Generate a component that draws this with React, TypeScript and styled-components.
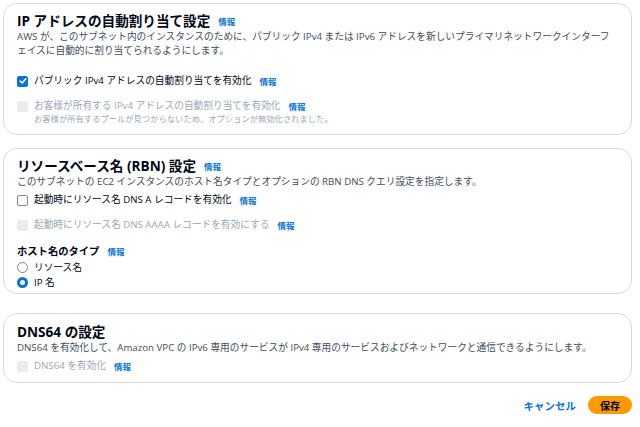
import React from 'react';
import styled, { createGlobalStyle } from 'styled-components';

const GlobalStyle = createGlobalStyle`
  html, body {
    margin: 0;
    padding: 0;
    background: #ffffff;
  }
  body {
    font-family: "Open Sans", "Noto Sans CJK JP", sans-serif;
    color: #000716;
  }
`;

const Page = styled.div`
  width: 640px;
  box-sizing: border-box;
  padding: 3px 8px 0 3px;
  display: flex;
  flex-direction: column;
`;

const Card = styled.section<{ $pt: number; $pb: number; $mb: number }>`
  border: 1px solid #d5d9de;
  border-radius: 14px;
  padding: ${(p) => p.$pt}px 10px ${(p) => p.$pb}px 13px;
  margin-bottom: ${(p) => p.$mb}px;
  display: flex;
  flex-direction: column;
`;

const Header = styled.div`
  display: flex;
  align-items: center;
  gap: 8px;
  height: 18px;
`;

const Title = styled.h2`
  margin: 0;
  font-size: 13.6px;
  line-height: 18px;
  font-weight: 700;
  color: #000716;
`;

const SubTitle = styled.h3`
  margin: 0;
  font-size: 10.3px;
  line-height: 16px;
  font-weight: 700;
  color: #000716;
`;

const Info = styled.a`
  font-size: 8.5px;
  font-weight: 700;
  color: #0972d3;
  text-decoration: none;
`;

const Description = styled.p<{ $mb: number }>`
  margin: 0 0 ${(p) => p.$mb}px 0;
  font-size: 9.7px;
  line-height: 14px;
  color: #414d5c;
  white-space: nowrap;
`;

const Field = styled.div<{ $mb: number }>`
  display: flex;
  align-items: flex-start;
  gap: 6px;
  margin-bottom: ${(p) => p.$mb}px;
`;

const Box = styled.span<{ $checked?: boolean; $disabled?: boolean }>`
  flex: none;
  width: 11px;
  height: 11px;
  margin-top: 2.5px;
  box-sizing: border-box;
  border-radius: 2px;
  display: flex;
  align-items: center;
  justify-content: center;
  background: ${(p) => (p.$checked ? '#0972d3' : p.$disabled ? '#e9ebed' : '#ffffff')};
  border: 1.4px solid ${(p) => (p.$checked ? '#0972d3' : p.$disabled ? '#e9ebed' : '#7d8998')};
`;

const FieldText = styled.div`
  display: flex;
  flex-direction: column;
`;

const LabelLine = styled.div`
  display: flex;
  align-items: center;
  gap: 8px;
`;

const Label = styled.span<{ $disabled?: boolean }>`
  font-size: 9.7px;
  line-height: 16px;
  color: ${(p) => (p.$disabled ? '#9ba7b6' : '#000716')};
`;

const Hint = styled.span`
  font-size: 8.3px;
  line-height: 10px;
  color: #9ba7b6;
`;

const RadioRow = styled.div`
  display: flex;
  align-items: center;
  gap: 6px;
  height: 15px;
`;

const RadioDot = styled.span<{ $checked?: boolean }>`
  flex: none;
  width: 11px;
  height: 11px;
  box-sizing: border-box;
  border-radius: 50%;
  background: #ffffff;
  border: ${(p) => (p.$checked ? '3.5px solid #0972d3' : '1.4px solid #7d8998')};
`;

const Footer = styled.div`
  display: flex;
  justify-content: flex-end;
  align-items: center;
  gap: 12px;
  margin-top: 13px;
`;

const LinkButton = styled.button`
  border: none;
  background: none;
  padding: 0;
  font-family: inherit;
  font-size: 10.5px;
  font-weight: 700;
  color: #0972d3;
`;

const PrimaryButton = styled.button`
  border: none;
  background: #ff9900;
  border-radius: 10px;
  width: 44px;
  height: 18px;
  padding: 0;
  font-family: inherit;
  font-size: 10px;
  font-weight: 700;
  color: #000716;
`;

const Check = () => (
  <svg width="8" height="8" viewBox="0 0 8 8">
    <path d="M1.2 4.2 L3.2 6 L6.8 1.8" fill="none" stroke="#fff" strokeWidth="1.6" strokeLinecap="round" strokeLinejoin="round" />
  </svg>
);

type CheckProps = {
  label: string;
  checked?: boolean;
  disabled?: boolean;
  hint?: string;
  mb: number;
};

const CheckField = ({ label, checked, disabled, hint, mb }: CheckProps) => (
  <Field $mb={mb}>
    <Box $checked={checked} $disabled={disabled}>{checked && <Check />}</Box>
    <FieldText>
      <LabelLine>
        <Label $disabled={disabled}>{label}</Label>
        <Info href="#">情報</Info>
      </LabelLine>
      {hint && <Hint>{hint}</Hint>}
    </FieldText>
  </Field>
);

const App = () => (
  <Page>
    <GlobalStyle />
    <Card $pt={8} $pb={10} $mb={13}>
      <Header>
        <Title>IP アドレスの自動割り当て設定</Title>
        <Info href="#">情報</Info>
      </Header>
      <Description $mb={15}>
        AWS が、このサブネット内のインスタンスのために、パブリック IPv4 または IPv6 アドレスを新しいプライマリネットワークインターフ<br />
        ェイスに自動的に割り当てられるようにします。
      </Description>
      <CheckField label="パブリック IPv4 アドレスの自動割り当てを有効化" checked mb={9} />
      <CheckField
        label="お客様が所有する IPv4 アドレスの自動割り当てを有効化"
        disabled
        hint="お客様が所有するプールが見つからないため、オプションが無効化されました。"
        mb={0}
      />
    </Card>

    <Card $pt={8} $pb={3} $mb={19}>
      <Header>
        <Title>リソースベース名 (RBN) 設定</Title>
        <Info href="#">情報</Info>
      </Header>
      <Description $mb={3}>
        このサブネットの EC2 インスタンスのホスト名タイプとオプションの RBN DNS クエリ設定を指定します。
      </Description>
      <CheckField label="起動時にリソース名 DNS A レコードを有効化" mb={9} />
      <CheckField label="起動時にリソース名 DNS AAAA レコードを有効にする" disabled mb={9} />
      <Header>
        <SubTitle>ホスト名のタイプ</SubTitle>
        <Info href="#">情報</Info>
      </Header>
      <RadioRow>
        <RadioDot />
        <Label>リソース名</Label>
      </RadioRow>
      <RadioRow>
        <RadioDot $checked />
        <Label>IP 名</Label>
      </RadioRow>
    </Card>

    <Card $pt={9} $pb={8} $mb={0}>
      <Header>
        <Title>DNS64 の設定</Title>
      </Header>
      <Description $mb={3}>
        DNS64 を有効化して、Amazon VPC の IPv6 専用のサービスが IPv4 専用のサービスおよびネットワークと通信できるようにします。
      </Description>
      <CheckField label="DNS64 を有効化" disabled mb={0} />
    </Card>

    <Footer>
      <LinkButton>キャンセル</LinkButton>
      <PrimaryButton>保存</PrimaryButton>
    </Footer>
  </Page>
);

export default App;
